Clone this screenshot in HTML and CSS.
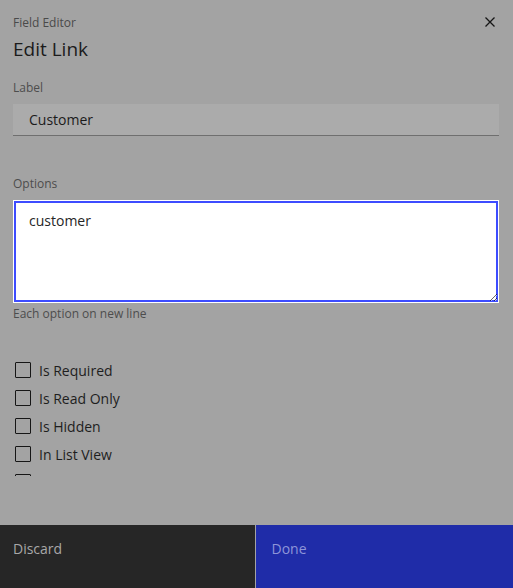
FILE: index.html
```html
<!DOCTYPE html>
<html lang="en">
<head>
    <meta charset="UTF-8" />
    <meta name="viewport" content="width=device-width, initial-scale=1.0"/>
    <title>Edit Link</title>
    <link rel="stylesheet" href="styles.css">
</head>
<body>
    <div class="modal">
        <header class="modal-header">
            <div class="modal-label">Field Editor</div>
            <h2 class="modal-title">Edit Link</h2>
            <button class="close-btn" aria-label="Close">
                <svg width="10" height="10" viewBox="0 0 10 10">
                    <path d="M0.5 0.5 L9.5 9.5 M9.5 0.5 L0.5 9.5" stroke="#161616" stroke-width="1.3" fill="none"/>
                </svg>
            </button>
        </header>

        <div class="modal-content">
            <div class="field">
                <label class="field-label">Label</label>
                <input class="text-input" type="text" value="Customer" />
            </div>

            <div class="field field-options">
                <label class="field-label">Options</label>
                <textarea class="text-area">customer</textarea>
                <div class="helper">Each option on new line</div>
            </div>

            <div class="checks">
                <label class="check"><span class="box"></span>Is Required</label>
                <label class="check"><span class="box"></span>Is Read Only</label>
                <label class="check"><span class="box"></span>Is Hidden</label>
                <label class="check"><span class="box"></span>In List View</label>
                <!-- next row is scrolled out of view -->
                <label class="check"><span class="box"></span></label>
            </div>
        </div>

        <footer class="modal-footer">
            <button class="btn btn-secondary">Discard</button>
            <button class="btn btn-primary">Done</button>
        </footer>
    </div>
</body>
</html>
```

FILE: styles.css
```css
* {
    margin: 0;
    padding: 0;
    box-sizing: border-box;
}

body {
    font-family: 'Open Sans', 'Noto Sans', sans-serif;
    background-color: #a3a3a3;
    color: #1b1b1b;
}

.modal {
    display: flex;
    flex-direction: column;
    height: 588px;
    background-color: #a3a3a3;
}

.modal-header {
    position: relative;
    padding: 15px 13px 0;
}

.modal-label {
    font-size: 12px;
    line-height: 16px;
    color: #4a4a4a;
}

.modal-title {
    margin-top: 4px;
    font-size: 19px;
    font-weight: 400;
    line-height: 28px;
    color: #1b1b1b;
}

.close-btn {
    position: absolute;
    top: 12px;
    right: 13px;
    width: 20px;
    height: 20px;
    border: none;
    background: transparent;
    display: flex;
    align-items: center;
    justify-content: center;
}

.modal-content {
    height: 413px; /* clips at 476 */
    overflow: hidden;
    padding: 17px 14px 0 13px;
}

.field {
    display: flex;
    flex-direction: column;
}

.field-options {
    margin-top: 40px;
}

.field-label {
    font-size: 12px;
    line-height: 16px;
    color: #4d4d4d;
    margin-bottom: 8px;
}

.text-input {
    height: 32px;
    padding: 0 16px;
    border: none;
    border-bottom: 1px solid #6f6f6f;
    background-color: #ababab;
    font-family: inherit;
    font-size: 14px;
    color: #1b1b1b;
    outline: none;
}

.text-area {
    height: 103px;
    padding: 10px 15px;
    border: 1px solid #ffffff;
    box-shadow: inset 0 0 0 2px #3d4cff;
    background-color: #ffffff;
    font-family: inherit;
    font-size: 14px;
    line-height: 20px;
    color: #262626;
    resize: vertical;
    outline: none;
}

.helper {
    margin-top: 3px;
    font-size: 12px;
    line-height: 16px;
    color: #4d4d4d;
}

.checks {
    margin-top: 34px;
    display: flex;
    flex-direction: column;
}

.check {
    display: flex;
    align-items: center;
    gap: 8px;
    height: 28px;
    padding-left: 2px;
    font-size: 14px;
    color: #1e1e1e;
}

.box {
    width: 16px;
    height: 16px;
    border: 1px solid #161616;
    border-radius: 1px;
}

.modal-footer {
    display: flex;
    height: 63px;
    margin-top: auto;
}

.btn {
    flex: 1;
    border: none;
    text-align: left;
    padding: 15px 13px 0;
    font-family: inherit;
    font-size: 14px;
    line-height: 18px;
    display: flex;
    align-items: flex-start;
}

.btn-secondary {
    background-color: #262626;
    color: #a8a8a8;
    border-right: 1px solid #a3a3a3;
}

.btn-primary {
    background-color: #1f2ca8;
    color: #8e95d8;
    padding-left: 16px;
}
```
